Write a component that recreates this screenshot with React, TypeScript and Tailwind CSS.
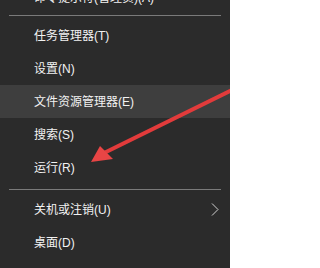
import React from 'react';

type Item = { label: string; active?: boolean; submenu?: boolean };

const groupA: Item[] = [
  { label: '任务管理器(T)' },
  { label: '设置(N)' },
  { label: '文件资源管理器(E)', active: true },
  { label: '搜索(S)' },
  { label: '运行(R)' },
];

const groupB: Item[] = [
  { label: '关机或注销(U)', submenu: true },
  { label: '桌面(D)' },
];

function Row({ item }: { item: Item }) {
  return (
    <div
      className={
        'flex h-[33px] items-center justify-between pl-[34px] pr-[10px] ' +
        (item.active ? 'bg-[#3e3e3e]' : '')
      }
    >
      <span>{item.label}</span>
      {item.submenu && (
        <svg width="8" height="13" viewBox="0 0 8 13" className="mr-[1px]">
          <path d="M1 0.5 L7 6.5 L1 12.5" fill="none" stroke="#d0d0d0" strokeWidth="1" />
        </svg>
      )}
    </div>
  );
}

function Separator() {
  return (
    <div className="px-[9px] pt-[5px] pb-[3px]">
      <div className="h-px bg-[#7a7a7a]" />
    </div>
  );
}

export default function App() {
  return (
    <div
      className="relative h-[268px] w-[230px] overflow-hidden bg-[#2b2b2b] text-[12px] text-[#f2f2f2]"
      style={{ fontFamily: '"Liberation Sans", "Noto Sans CJK SC", sans-serif' }}
    >
      {/* 上一项只露出底部 */}
      <div className="mt-[-23px] flex h-[33px] items-center pl-[34px] pt-[8px]">
        <span>命令提示符(管理员)(A)</span>
      </div>
      <Separator />
      {groupA.map((it) => (
        <Row key={it.label} item={it} />
      ))}
      <Separator />
      {groupB.map((it) => (
        <Row key={it.label} item={it} />
      ))}

      {/* 红色标注箭头 */}
      <svg
        className="pointer-events-none absolute left-0 top-0"
        width="230"
        height="268"
        viewBox="0 0 230 268"
      >
        <line x1="232" y1="90" x2="104" y2="153" stroke="#e23b3b" strokeWidth="4" strokeLinecap="round" />
        <polygon points="91,162 100,146 113,159" fill="#e84545" />
      </svg>
    </div>
  );
}
